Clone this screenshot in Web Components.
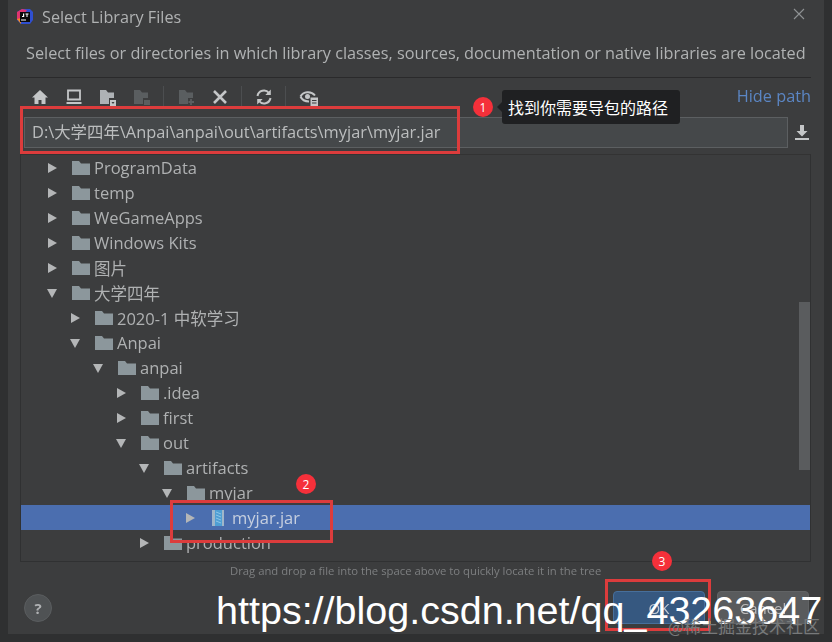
<!DOCTYPE html>
<html lang="en">
<meta charset="UTF-8">
<title>Select Library Files</title>
<style>
  html, body { margin: 0; height: 100%; background: #2f3031; overflow: hidden; }
  body { font-family: "Open Sans", "Noto Sans CJK SC", sans-serif; position: relative; }
  help-button { margin-right: auto; }
</style>

<template id="dialog-template">
  <style>
    :host { display: flex; flex-direction: column; width: 816px; height: 634px; margin-left: 8px;
      background: #3c3d3e; color: #b4b6b7; box-sizing: border-box; filter: blur(.35px); }
    header { display: flex; align-items: center; height: 34px; padding: 0 0 0 8px; gap: 8px; font-size: 16.200px; color: #b0b2b3; }
    header .close { margin-left: auto; margin-right: 19px; margin-top: -6px; }
    .desc { height: 36px; margin: 2px 0 0 18px; font-size: 16.250px; line-height: 34px; color: #b0b2b3; white-space: nowrap; }
    .main { margin: 5px 13px 0 12px; border-top: 1px solid #2a2a2b; display: flex; flex-direction: column; }
    .tools { height: 38px; display: flex; align-items: center; justify-content: space-between; }
    .hide { color: #5b86c4; font-size: 16.300px; margin-top: -2px; }
    .path { display: flex; align-items: center; height: 32px; padding-left: 4px; }
    .tree { margin-top: 6px; }
    .hint { font-size: 11.300px; color: #7d7f80; padding-left: 210px; height: 18px; line-height: 18px; }
    footer { display: flex; align-items: center; padding: 11px 15px 0 16px; gap: 12px; }
  </style>
  <header>
    <slot name="logo"></slot>
    <span>Select Library Files</span>
    <svg class="close" width="12" height="12" viewBox="0 0 12 12"><path d="M1 1l10 10M11 1L1 11" stroke="#8f9294" stroke-width="1.100"/></svg>
  </header>
  <div class="desc">Select files or directories in which library classes, sources, documentation or native libraries are located</div>
  <div class="main">
    <div class="tools"><slot name="tools"></slot><span class="hide">Hide path</span></div>
    <div class="path"><slot name="path"></slot></div>
    <div class="tree"><slot name="tree"></slot></div>
    <div class="hint">Drag and drop a file into the space above to quickly locate it in the tree</div>
  </div>
  <footer><slot name="footer"></slot></footer>
</template>

<template id="toolbar-template">
  <style>
    :host { display: flex; align-items: center; height: 26px; margin-left: 10px; }
    svg { display: block; width: 20px; height: 20px; margin-right: 14px; flex: none; }
    i { width: 1px; height: 22px; background: #4c4e50; margin-left: -3px; flex: none; }
  </style>
  <svg viewBox="0 0 20 20"><path d="M10 3L2 10.500h2.500V17h4v-4h3v4h4v-6.500H18z" fill="#c4c6c7"/></svg>
  <svg viewBox="0 0 20 20"><path d="M4 3.500h12v9H4z" fill="none" stroke="#c4c6c7" stroke-width="1.800"/><path d="M2.500 15h15v2h-15z" fill="#c4c6c7"/></svg>
  <svg viewBox="0 0 20 20"><path d="M2 3h6l2 2.500h6V11h-5v6H2z" fill="#aeb2b5"/><path d="M12 13h6v6h-6z" fill="#c4c6c7"/><path d="M13.500 15h3l-1.500 2z" fill="#3c3d3e"/></svg>
  <svg viewBox="0 0 20 20"><path d="M2 3h6l2 2.500h6V11h-5v6H2z" fill="#5a5e60"/><path d="M12 13h6v5h-6z" fill="#5a5e60"/></svg>
  <i style="margin-right:13px"></i>
  <svg viewBox="0 0 20 20" style="margin-right:13px"><path d="M2 3h6l2 2.500h6V11h-5v6H2z" fill="#5a5e60"/><path d="M14 12v6M11.500 15h5.500" stroke="#5a5e60" stroke-width="1.800"/></svg>
  <svg viewBox="0 0 20 20"><path d="M4 4l12 12M16 4L4 16" stroke="#c4c6c7" stroke-width="2.600"/></svg>
  <i style="margin-right:12px"></i>
  <svg viewBox="0 0 20 20"><path d="M3.500 9a6.500 6.500 0 0 1 11.500-3M16.500 11a6.500 6.500 0 0 1-11.500 3" fill="none" stroke="#c4c6c7" stroke-width="2"/><path d="M16.800 2.500v5.500h-5.500zM3.200 17.500V12h5.500z" fill="#c4c6c7"/></svg>
  <i style="margin-right:13px"></i>
  <svg viewBox="0 0 20 20"><path d="M1.500 9.500C4 4.500 12 3.500 16 8.500" fill="none" stroke="#c4c6c7" stroke-width="2"/><path d="M1.500 9.500C3 13 6 14.500 10 14.500" fill="none" stroke="#c4c6c7" stroke-width="2"/><circle cx="8.500" cy="9.500" r="2.500" fill="#c4c6c7"/><path d="M11.500 10.500h7.500v8.500h-7.500z" fill="#c4c6c7"/><path d="M13 13.500h4.500M13 16h4.500" stroke="#3c3d3e" stroke-width="1.200"/></svg>
</template>

<template id="path-template">
  <style>
    :host { display: flex; align-items: center; gap: 5px; flex: 1; }
    .field { flex: 1; height: 31px; box-sizing: border-box; background: #45484a; border: 1px solid #5c5f61; padding-left: 7px;
      font-size: 16.400px; line-height: 28px; color: #bbbdbe; white-space: nowrap; }
    svg { width: 18px; height: 18px; flex: none; }
  </style>
  <div class="field"><slot></slot></div>
  <svg viewBox="0 0 18 18"><path d="M7 2h4v6h3.500L9 13.500 3.500 8H7zM2 15h14v2H2z" fill="#c4c6c7"/></svg>
</template>

<template id="tree-template">
  <style>
    :host { display: block; position: relative; height: 408px; width: 791px; overflow: hidden; box-sizing: border-box;
      border: 1px solid #303132; border-top-color: #333; }
    .bar { position: absolute; right: 0; top: 147px; width: 11px; height: 168px; background: #5a5c5e; }
  </style>
  <slot></slot>
  <div class="bar"></div>
</template>

<template id="row-template">
  <style>
    :host { display: flex; align-items: center; height: 25px; font-size: 16.500px; color: #afb1b2; white-space: nowrap;
      padding-left: calc(26px + var(--level, 0) * 23px); }
    :host([selected]) { background: #4b6eaf; color: #c6cfdf; }
    .arrow { width: 10px; height: 12px; margin-right: 15px; flex: none; }
    .icon { width: 18px; height: 16px; margin-right: 4px; flex: none; }
    :host([jar]) .arrow { margin-right: 17px; }
    :host([jar]) .icon { height: 18px; width: 16px; margin-right: 4px; }
    #icon { display: contents; }
  </style>
  <svg class="arrow" viewBox="0 0 10 12"><path id="arrow" fill="#b4b6b7"/></svg>
  <span id="icon"></span>
  <slot></slot>
</template>

<template id="button-template">
  <style>
    :host { display: flex; align-items: center; justify-content: center; width: 92px; height: 33px; border-radius: 4px;
      background: #595b5d; color: #bbb; font-size: 15px; box-sizing: border-box; border: 1px solid #616365; }
    :host([primary]) { background: #365880; border-color: #476f9b; color: #c5cbd3; }
  </style>
  <slot></slot>
</template>

<template id="help-template">
  <style>
    :host { display: flex; align-items: center; justify-content: center; width: 28px; height: 28px; border-radius: 50%;
      background: #4f5254; border: 1px solid #5a5d5f; box-sizing: border-box; color: #afb1b3; font: bold 15px "Open Sans", sans-serif; }
  </style>
  ?
</template>

<template id="badge-template">
  <style>
    :host { position: absolute; display: flex; align-items: center; justify-content: center; width: 20px; height: 20px;
      border-radius: 50%; background: #f5303a; color: #fff; font: 12px "Open Sans", sans-serif; }
  </style>
  <slot></slot>
</template>

<template id="mark-template">
  <style>
    :host { position: absolute; box-sizing: border-box; border: 3px solid #dc3c3c; }
  </style>
</template>

<template id="tip-template">
  <style>
    :host { position: absolute; left: 502px; top: 90px; width: 178px; height: 34px; box-sizing: border-box; background: #1f2022; border-radius: 3px;
      color: #fff; font: 16px/34px "Noto Sans CJK SC", sans-serif; padding-left: 6px; white-space: nowrap; }
    :host::before { content: ""; position: absolute; left: -5px; top: 12px; border: 5px solid transparent; border-left: 0; border-right-color: #1f2022; }
  </style>
  <slot></slot>
</template>

<template id="stamp-template">
  <style>
    :host { position: absolute; left: 216px; top: 588px; white-space: nowrap; color: #fff;
      font: 39.500px/44px "Liberation Sans", sans-serif; }
    span { position: absolute; left: 452px; top: 27px; color: #77797a; font: 17px/22px "Noto Sans CJK SC", sans-serif; }
  </style>
  <slot></slot><span>@稀土掘金技术社区</span>
</template>

<app-dialog>
  <svg slot="logo" width="18" height="18" viewBox="0 0 18 18">
    <path d="M1 4l5-3h8l3 3v8l-3 4H5l-4-4z" fill="#2f4fd0"/>
    <path d="M1 4l5-3 5 1-7 9-3 1z" fill="#e0336f"/>
    <path d="M1 11l4-1v6z" fill="#f28a24"/>
    <path d="M4 4h10v10H4z" fill="#0b0b0b"/>
    <path d="M5 11.500h5v1H5zM7 5.500h1.200v3.500H6V8h1zM9.500 5.500h3v1h-1v2.500h-1V6.500h-1z" fill="#fff"/>
  </svg>
  <tool-bar slot="tools"></tool-bar>
  <path-field slot="path">D:\大学四年\Anpai\anpai\out\artifacts\myjar\myjar.jar</path-field>
  <file-tree slot="tree">
    <tree-row level="0">ProgramData</tree-row>
    <tree-row level="0">temp</tree-row>
    <tree-row level="0">WeGameApps</tree-row>
    <tree-row level="0">Windows Kits</tree-row>
    <tree-row level="0">图片</tree-row>
    <tree-row level="0" open>大学四年</tree-row>
    <tree-row level="1">2020-1 中软学习</tree-row>
    <tree-row level="1" open>Anpai</tree-row>
    <tree-row level="2" open>anpai</tree-row>
    <tree-row level="3">.idea</tree-row>
    <tree-row level="3">first</tree-row>
    <tree-row level="3" open>out</tree-row>
    <tree-row level="4" open>artifacts</tree-row>
    <tree-row level="5" open>myjar</tree-row>
    <tree-row level="6" jar selected>myjar.jar</tree-row>
    <tree-row level="4">production</tree-row>
    <tree-row level="3">src</tree-row>
  </file-tree>
  <help-button slot="footer"></help-button>
  <dialog-button slot="footer" primary>OK</dialog-button>
  <dialog-button slot="footer">Cancel</dialog-button>
</app-dialog>

<red-mark style="left:20px;top:106px;width:440px;height:48px"></red-mark>
<red-mark style="left:170px;top:500px;width:163px;height:43px"></red-mark>
<red-mark style="left:605px;top:579px;width:106px;height:52px"></red-mark>
<note-badge style="left:473px;top:97px">1</note-badge>
<note-badge style="left:296px;top:474px">2</note-badge>
<note-badge style="left:652px;top:551px">3</note-badge>
<note-tip>找到你需要导包的路径</note-tip>
<water-stamp>https://blog.csdn.net/qq_43263647</water-stamp>

<script>
  // 単純なものはテンプレートをそのまま shadow に入れるだけ
  function plain(tag, id) {
    customElements.define(tag, class extends HTMLElement {
      connectedCallback() {
        if (this.shadowRoot) return;
        var clone = document.getElementById(id).content.cloneNode(true);
        this.attachShadow({mode: 'open'}).appendChild(clone);
      }
    });
  }

  plain('app-dialog', 'dialog-template');
  plain('tool-bar', 'toolbar-template');
  plain('path-field', 'path-template');
  plain('file-tree', 'tree-template');
  plain('dialog-button', 'button-template');
  plain('help-button', 'help-template');
  plain('note-badge', 'badge-template');
  plain('red-mark', 'mark-template');
  plain('note-tip', 'tip-template');
  plain('water-stamp', 'stamp-template');

  var FOLDER = '<svg class="icon" viewBox="0 0 18 16"><path d="M0 1h7l2 2.500h9V15H0z" fill="#8c979c"/></svg>';
  var JAR = '<svg class="icon" viewBox="0 0 16 18"><path d="M0 1h12v16H0z" fill="#9fb6c9"/>' +
    '<path d="M3 1h7v16H3z" fill="#4f9fd4"/>' +
    '<path d="M4 3l5 2M4 6l5 2M4 9l5 2M4 12l5 2" stroke="#8cc6e8" stroke-width="1"/></svg>';

  class TreeRow extends HTMLElement {
    connectedCallback() {
      if (this.shadowRoot) return;
      var clone = document.getElementById('row-template').content.cloneNode(true);
      var shadow = this.attachShadow({mode: 'open'});
      shadow.appendChild(clone);
      this.style.setProperty('--level', this.getAttribute('level') || 0);
      shadow.getElementById('arrow').setAttribute('d', this.hasAttribute('open') ? 'M0 2h10L5 11z' : 'M1 1l9 5-9 5z');
      shadow.getElementById('icon').innerHTML = this.hasAttribute('jar') ? JAR : FOLDER;
    }
  }
  customElements.define('tree-row', TreeRow);
</script>
</html>
